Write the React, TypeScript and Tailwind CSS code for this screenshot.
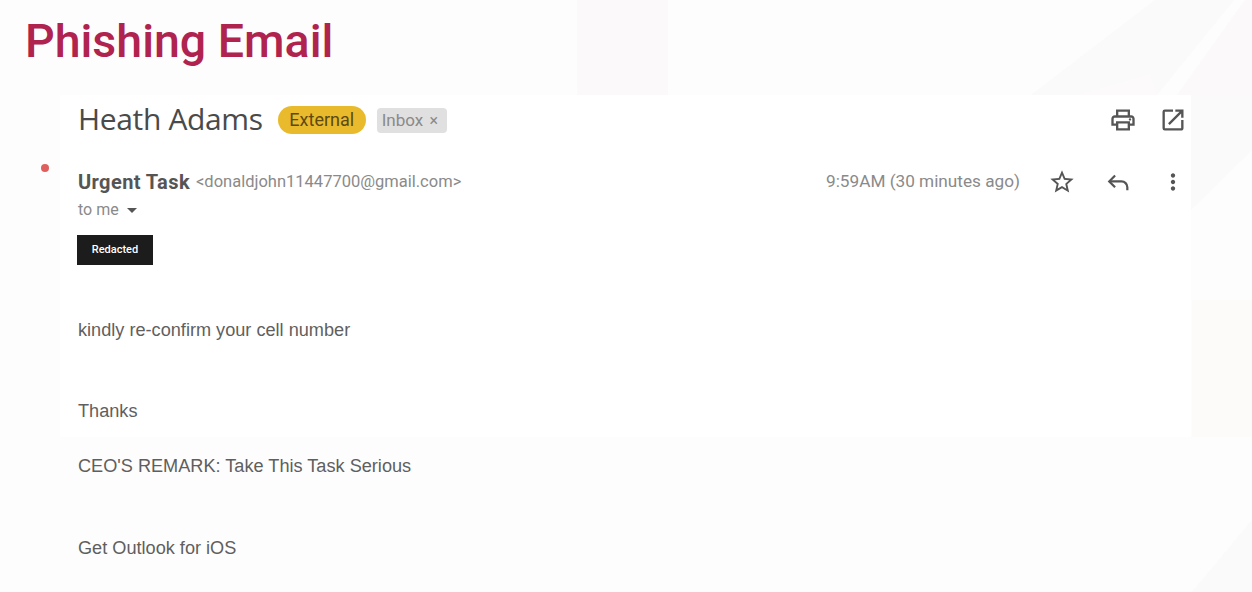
import React from "react";
import { MdArrowDropDown, MdMoreVert, MdOpenInNew, MdOutlinePrint, MdStarBorder } from "react-icons/md";

export default function App() {
  return (
    <div className="relative w-[1252px] h-[592px] overflow-hidden bg-[#fdfdfd] font-['Roboto',sans-serif]">
      {/* faint slide background shapes */}
      <svg className="absolute inset-0" width="1252" height="592" viewBox="0 0 1252 592">
        <rect x="577" y="0" width="91" height="95" fill="#fbf9fa" />
        <polygon points="1031,95 1155,0 1234,0 1157,95" fill="#fafafb" />
        <polygon points="1077,95 1150,74 1157,95" fill="#fcfafb" />
        <polygon points="1177,95 1245,0 1252,0 1252,95" fill="#fcf9fa" />
        <polygon points="1191,95 1252,95 1252,150 1191,210" fill="#fbfafb" />
        <rect x="1192" y="300" width="60" height="137" fill="#fdfafa" />
        <polygon points="1192,592 1252,520 1252,592" fill="#fafafb" />
      </svg>

      <div className="relative">
        <h1 className="pl-[25px] pt-[12px] h-[95px] text-[46.5px] leading-[58px] font-medium text-[#b0234f]">
          Phishing Email
        </h1>

        <div className="ml-[60px] w-[1131px] h-[342px] bg-white pl-[18px] pr-[4px]">
          <div className="flex items-center h-[50px]">
            <span className="text-[30px] leading-[38px] mt-[-3px] text-[#4a4a4a] font-['Open_Sans',sans-serif] tracking-[-0.35px]">
              Heath Adams
            </span>
            <span className="ml-[15px] h-[28px] w-[88px] rounded-full bg-[#e9bb2c] text-center text-[18px] leading-[28px] text-[#5c4a12]">
              External
            </span>
            <span className="ml-[11px] h-[25px] w-[70px] rounded-[4px] bg-[#e0e0e0] pl-[5px] text-[17px] leading-[25px] text-[#8a8a8a]">
              Inbox <span className="ml-[2px] text-[16px]">×</span>
            </span>
            <div className="ml-auto flex items-center gap-[22px] text-[#555555]">
              <MdOutlinePrint size={28} />
              <MdOpenInNew size={28} />
            </div>
          </div>

          <div className="relative mt-[24px] flex items-center h-[26px] text-[#5a5a5a]">
            <span className="absolute left-[-37px] top-[-5px] h-[8px] w-[8px] rounded-full bg-[#df5f5f]" />
            <span className="text-[20px] font-bold text-[#555555] tracking-[0.4px]">Urgent Task</span>
            <span className="ml-[6px] text-[16.5px] text-[#8a8a8a]">&lt;donaldjohn11447700@gmail.com&gt;</span>
            <span className="ml-auto text-[17.2px] text-[#8a8a8a]">9:59AM (30 minutes ago)</span>
            <div className="ml-[28px] mr-[1px] flex items-center gap-[28px] text-[#555555]">
              <MdStarBorder size={28} />
              <svg width="28" height="28" viewBox="0 0 24 24" fill="none" stroke="currentColor" strokeWidth="1.9">
                <path d="M9.5 6.5 4.5 11.5l5 5" />
                <path d="M4.5 11.5H15a5 5 0 0 1 5 5V19" />
              </svg>
              <MdMoreVert size={26} />
            </div>
          </div>

          <div className="flex items-center h-[20px] mt-[5px] text-[16px] text-[#8a8a8a]">
            to me
            <MdArrowDropDown size={24} className="ml-[1px] text-[#555555]" />
          </div>

          <div className="mt-[15px] h-[30px] w-[76px] bg-[#1c1c1c] text-center text-[11px] font-medium leading-[30px] text-white ml-[-1px]">
            Redacted
          </div>

          <div className="font-['Liberation_Sans',sans-serif] text-[18.15px] leading-[22px] text-[#5f5f5f]">
            <p className="mt-[54px]">kindly re-confirm your cell number</p>
            <p className="mt-[59px]">Thanks</p>
            <p className="mt-[33px]">CEO&apos;S REMARK: Take This Task Serious</p>
            <p className="mt-[60px]">Get Outlook for iOS</p>
          </div>
        </div>
      </div>
    </div>
  );
}
